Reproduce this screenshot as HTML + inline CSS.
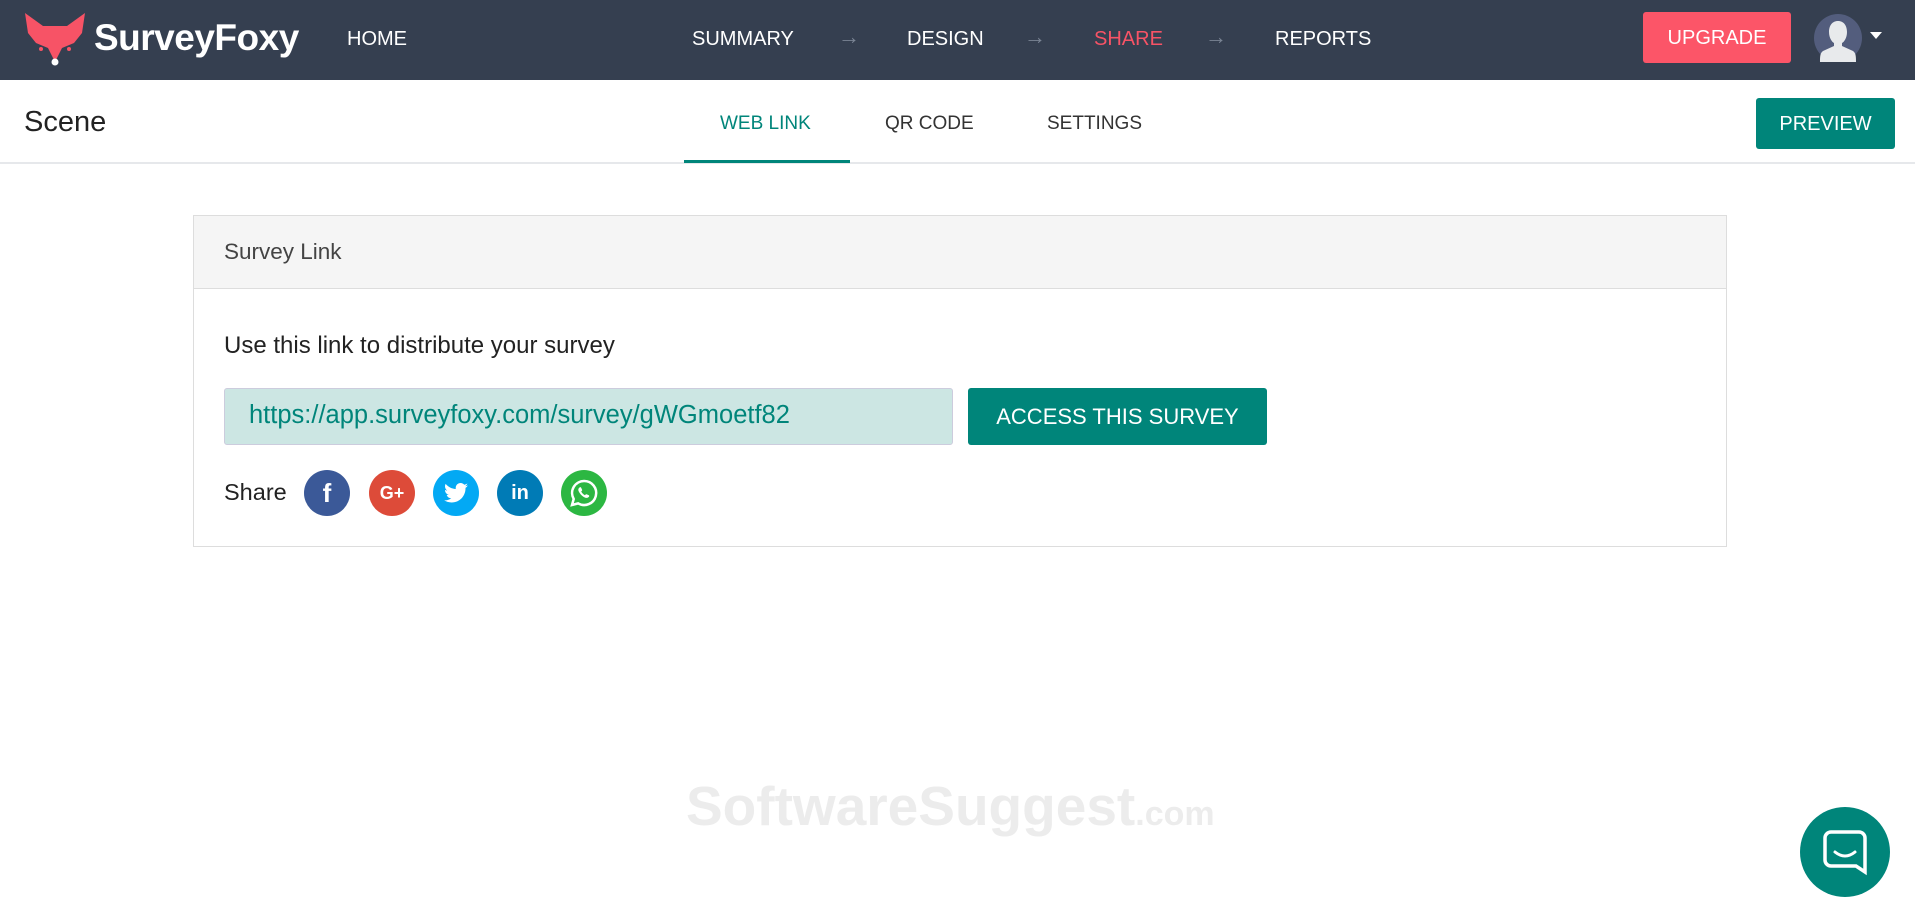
<!DOCTYPE html>
<html><head><meta charset="utf-8"><style>
*{margin:0;padding:0;box-sizing:border-box}
body{width:1915px;height:908px;overflow:hidden;background:#fff;font-family:"Liberation Sans",sans-serif;position:relative;color:#222}
.top{position:absolute;left:0;top:0;width:1915px;height:80px;background:#353f50}
.a{position:absolute;font-size:20px;color:#fff;top:28px}
.arr{position:absolute;top:24px;color:#7a8494;font-size:22px}
.sub{position:absolute;top:80px;left:0;width:1915px;height:84px;border-bottom:2px solid #e6e8eb;background:#fff}
.tab{position:absolute;top:113px;font-size:19px;color:#333}
.card{position:absolute;left:193px;top:215px;width:1534px;height:332px;border:1px solid #ddd}
.ch{height:73px;background:#f5f5f5;border-bottom:1px solid #ddd;font-size:22.5px;color:#444;padding:23px 0 0 30px}
.c{position:absolute;width:46px;height:46px;border-radius:50%;top:470px;color:#fff;display:flex;align-items:center;justify-content:center;font-weight:bold}
</style></head><body>
<div class="top"></div>
<svg style="position:absolute;left:24px;top:13px" width="62" height="54" viewBox="0 0 62 54"><path d="M1 0 L19 13 L43 13 L61 0 L58 20 L50 30 L38 35 L31 49 L24 35 L12 30 L4 20 Z" fill="#f75366"/><circle cx="17" cy="36" r="2" fill="#f75366"/><circle cx="45" cy="36" r="2" fill="#f75366"/><circle cx="31" cy="49" r="3.5" fill="#fff"/></svg>
<div style="position:absolute;left:94px;top:17px;font-size:37px;font-weight:bold;color:#fff;letter-spacing:-0.5px">SurveyFoxy</div>
<div class="a" style="left:347px">HOME</div>
<div class="a" style="left:692px">SUMMARY</div><div class="arr" style="left:838px">→</div>
<div class="a" style="left:907px">DESIGN</div><div class="arr" style="left:1024px">→</div>
<div class="a" style="left:1094px;color:#f75366">SHARE</div><div class="arr" style="left:1205px">→</div>
<div class="a" style="left:1275px">REPORTS</div>
<div style="position:absolute;left:1643px;top:12px;width:148px;height:51px;background:#fc5568;border-radius:3px;color:#fff;font-size:20px;text-align:center;line-height:53px">UPGRADE</div>
<svg style="position:absolute;left:1814px;top:14px" width="72" height="48" viewBox="0 0 72 48"><circle cx="24" cy="24" r="24" fill="#535d7d"/><path d="M24 7c6 0 9 5 9 11s-3 10-5 11v3l11 5c3 2 3 6 3 11H6c0-5 0-9 3-11l11-5v-3c-2-1-5-5-5-11s3-11 9-11z" fill="#e8eaec"/><path d="M56 18h12l-6 7z" fill="#fff"/></svg>
<div class="sub"></div>
<div style="position:absolute;left:24px;top:106px;font-size:29px;color:#222">Scene</div>
<div class="tab" style="left:720px;color:#00857a">WEB LINK</div>
<div style="position:absolute;left:684px;top:160px;width:166px;height:3px;background:#00857a"></div>
<div class="tab" style="left:885px">QR CODE</div>
<div class="tab" style="left:1047px">SETTINGS</div>
<div style="position:absolute;left:1756px;top:98px;width:139px;height:51px;background:#00857a;border-radius:3px;color:#fff;font-size:20px;text-align:center;line-height:53px">PREVIEW</div>
<div class="card"><div class="ch">Survey Link</div></div>
<div style="position:absolute;left:224px;top:332px;font-size:24px;color:#222">Use this link to distribute your survey</div>
<div style="position:absolute;left:224px;top:388px;width:729px;height:57px;background:#cce6e3;border:1px solid #ccd;border-radius:3px;font-size:25.5px;color:#00857a;padding:12px 0 0 24px">https://app.surveyfoxy.com/survey/gWGmoetf82</div>
<div style="position:absolute;left:968px;top:388px;width:299px;height:57px;background:#00857a;border-radius:3px;color:#fff;font-size:22px;text-align:center;line-height:57px">ACCESS THIS SURVEY</div>
<div style="position:absolute;left:224px;top:479px;font-size:23.5px;color:#222">Share</div>
<div class="c" style="left:304px;background:#3b5998;font-size:26px">f</div>
<div class="c" style="left:369px;background:#dd4b39;font-size:18px">G+</div>
<div class="c" style="left:433px;background:#03a9f4"><svg width="24" height="20" viewBox="0 0 24 20"><path d="M24 2.4c-.9.4-1.8.7-2.8.8 1-.6 1.8-1.6 2.2-2.7-1 .6-2 1-3.1 1.2C19.3.7 18 0 16.6 0c-2.7 0-4.9 2.2-4.9 4.9 0 .4 0 .8.1 1.1C7.7 5.8 4.1 3.9 1.7.9c-.4.7-.7 1.6-.7 2.5 0 1.7.9 3.2 2.2 4.1-.8 0-1.6-.2-2.2-.6v.1c0 2.4 1.7 4.4 3.9 4.8-.4.1-.8.2-1.3.2-.3 0-.6 0-.9-.1.6 2 2.4 3.4 4.6 3.4-1.7 1.3-3.8 2.1-6.1 2.1-.4 0-.8 0-1.2-.1C2.2 18.7 4.8 19.5 7.5 19.5c9.1 0 14-7.5 14-14v-.6c1-.7 1.8-1.6 2.5-2.5z" fill="#fff"/></svg></div>
<div class="c" style="left:497px;background:#007bb6;font-size:20px">in</div>
<div class="c" style="left:561px;background:#2cb742"><svg width="30" height="30" viewBox="0 0 30 30"><path d="M15 3a12 12 0 0 0-10.3 18L3 27l6.2-1.6A12 12 0 1 0 15 3z" fill="none" stroke="#fff" stroke-width="2.5"/><path d="M10.5 9.5c.5-.5 1.3-.5 1.6.1l1 2.2c.2.4 0 .8-.3 1.1l-.6.6c.8 1.6 2.1 2.9 3.7 3.7l.6-.6c.3-.3.8-.4 1.1-.3l2.2 1c.5.3.6 1.1.1 1.6-1 1-2.5 1.3-3.8.7-2.9-1.3-5.200-3.6-6.5-6.5-.6-1.3-.3-2.8.9-3.6z" fill="#fff"/></svg></div>
<div style="position:absolute;left:686px;top:774px;font-size:55px;font-weight:bold;color:#ececec;white-space:nowrap">SoftwareSuggest<span style="font-size:34px">.com</span></div>
<div style="position:absolute;left:1800px;top:807px;width:90px;height:90px;border-radius:50%;background:#00857a"></div>
<svg style="position:absolute;left:1823px;top:830px" width="44" height="46" viewBox="0 0 44 46"><path d="M8 2h28a6 6 0 0 1 6 6v34l-9-6H8a6 6 0 0 1-6-6V8a6 6 0 0 1 6-6z" fill="none" stroke="#fff" stroke-width="3.5"/><path d="M12 22q10 8 20 0" fill="none" stroke="#fff" stroke-width="3" stroke-linecap="round"/></svg>
</body></html>
